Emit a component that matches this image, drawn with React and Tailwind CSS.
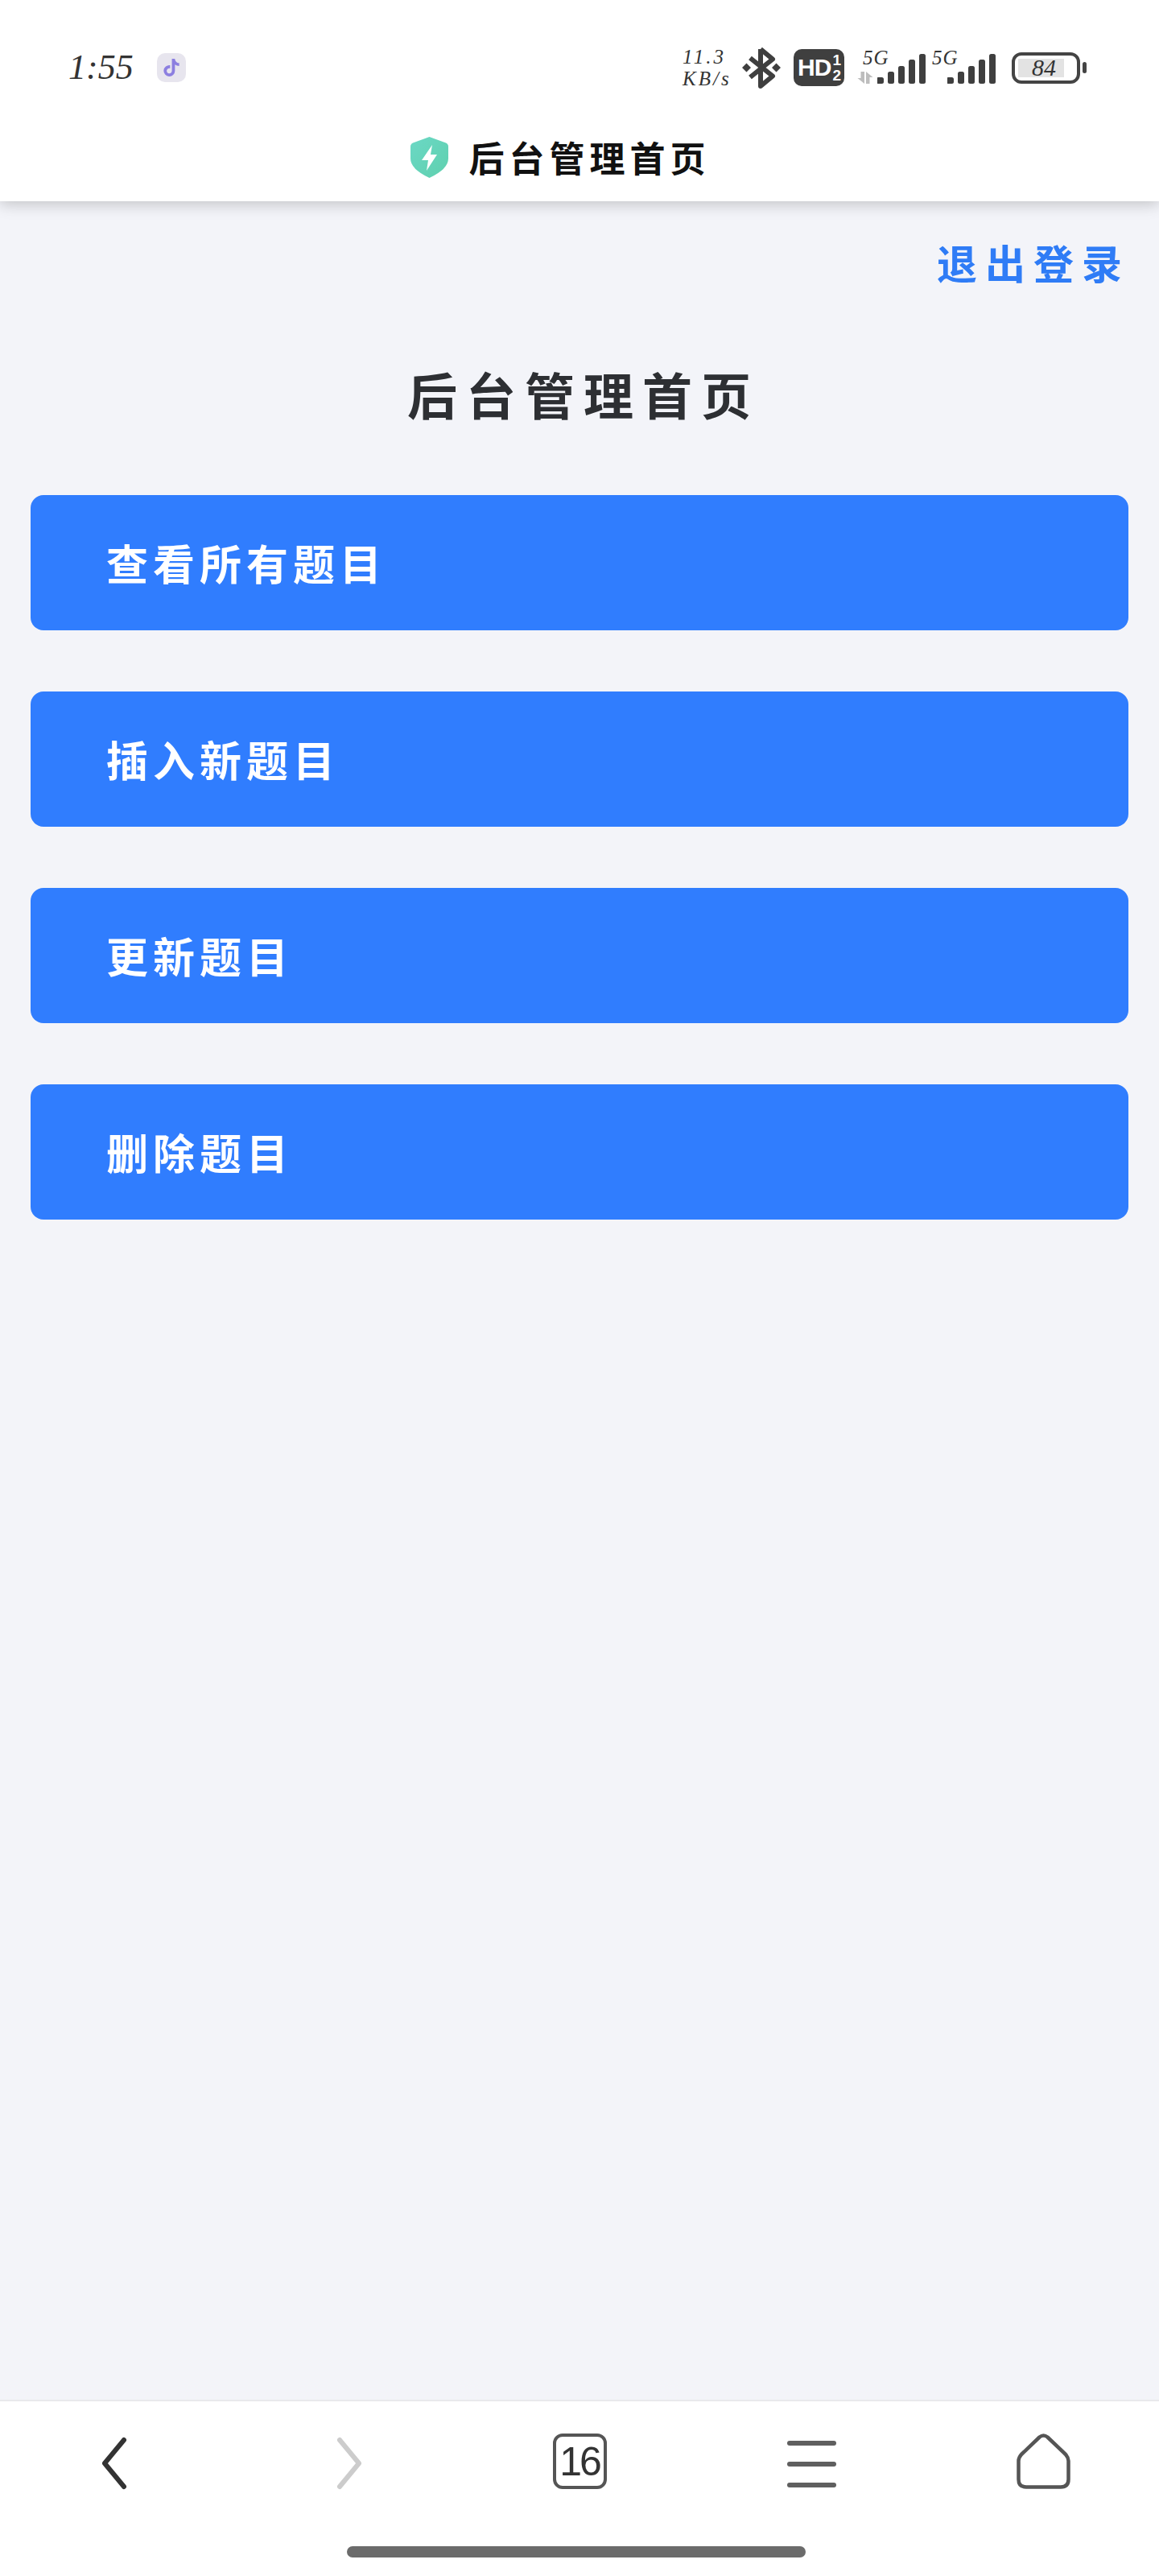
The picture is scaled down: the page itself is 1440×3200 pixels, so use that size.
import React from 'react';
import { FaTiktok } from 'react-icons/fa';

const MENU_ITEMS = ['查看所有题目', '插入新题目', '更新题目', '删除题目'];

const SERIF = "font-['Liberation_Serif',serif] italic";
const CJK = "font-['Noto_Sans_CJK_SC',sans-serif]";

const BAR_TOPS = [29, 22, 15, 7, 0];

const Bars = () => (
    <svg width="60" height="37" viewBox="0 0 60 37" className="shrink-0">
        {BAR_TOPS.map((top, i) => (
            <rect key={i} x={i * 13 - (i === 0 ? 1 : 0)} y={top} width={i === 0 ? 9 : 8} height={37 - top} rx="2.5" fill="#3f3f3f" />
        ))}
    </svg>
);

const Signal = ({ showArrows, width }) => (
    <div className={`relative flex items-end justify-end h-[40px] ${width}`}>
        <span className={`absolute left-0 top-[-6px] text-[25px] leading-[28px] tracking-[1px] text-[#333] ${SERIF} ${showArrows ? 'ml-[7px]' : ''}`}>5G</span>
        {showArrows && (
            <svg width="20" height="15" viewBox="0 0 20 15" className="absolute left-0 bottom-0">
                <path d="M9 0V15L0.5 8H4.5V0zM11 15V0l8.5 7h-4v8z" fill="#bdbdbd" />
            </svg>
        )}
        <Bars />
    </div>
);

const StatusBar = () => (
    <div className="flex items-center h-[138px] pt-[30px] pl-[85px] pr-[90px]">
        <span className={`text-[44px] leading-none text-[#333] ${SERIF}`}>1:55</span>
        <div className="flex items-center justify-center w-[36px] h-[36px] ml-[29px] rounded-[10px] bg-[#e7e5ee]">
            <FaTiktok className="text-[#8c7fe0] w-[20px] h-[22px]" />
        </div>

        <div className="flex items-center ml-auto">
            <div className={`flex flex-col w-[60px] text-[25px] leading-[27px] text-[#333] tracking-[3px] whitespace-nowrap ${SERIF}`}>
                <span>11.3</span>
                <span>KB/s</span>
            </div>

            {/* bluetooth */}
            <svg width="48" height="52" viewBox="0 0 48 52" className="ml-[14px]">
                <path d="M23 3v46l15-12.5L10 14M23 3l15 12.5L10 38" fill="none" stroke="#3f3f3f" strokeWidth="6" strokeLinejoin="round" />
                <path d="M5.5 20.5L11 26l-5.5 5.5L0 26zM42.5 20.5L48 26l-5.5 5.5L37 26z" fill="#3f3f3f" />
            </svg>

            <div className="flex items-center justify-between w-[63px] h-[46px] ml-[16px] pl-[5px] pr-[4px] rounded-[10px] bg-[#3f3f3f] text-white font-['Liberation_Sans',sans-serif] font-bold">
                <span className="text-[30px] leading-none tracking-[-1px]">HD</span>
                <span className="flex flex-col items-center text-[19px] leading-[19px]">
                    <span>1</span>
                    <span>2</span>
                </span>
            </div>

            <div className="ml-[16px]">
                <Signal showArrows width="w-[85px]" />
            </div>
            <div className="ml-[8px]">
                <Signal width="w-[79px]" />
            </div>

            {/* battery */}
            <div className="flex items-center ml-[20px]">
                <div className="w-[85px] h-[39px] p-[4px] rounded-[12px] border-[4px] border-[#444]">
                    <div className={`flex items-center justify-center w-[57px] h-full pl-[7px] bg-[#e3e3e3] text-[30px] leading-none text-[#333] ${SERIF}`}>84</div>
                </div>
                <div className="w-[5px] h-[14px] ml-[3px] rounded-full bg-[#444]" />
            </div>
        </div>
    </div>
);

const PageHeader = () => (
    <header className="relative z-10 h-[250px] bg-white shadow-[0_3px_18px_rgba(0,0,0,0.22)]">
        <StatusBar />
        <div className="flex items-center justify-center h-[112px] pr-[48px] pt-[2px]">
            <svg width="47" height="51" viewBox="0 0 47 51">
                <defs>
                    <linearGradient id="shield" x1="0" y1="0" x2="1" y2="1">
                        <stop offset="0" stopColor="#6bd8c5" />
                        <stop offset="1" stopColor="#5fd0ae" />
                    </linearGradient>
                </defs>
                <path d="M23.5 0L44 7.5Q47 9 47 12V27Q47 40 23.5 51Q0 40 0 27V12Q0 9 3 7.5z" fill="url(#shield)" />
                <path d="M27 10L14 29h8l-2 13 13-20h-8z" fill="#fff" />
            </svg>
            <h2 className={`ml-[26px] text-[44px] leading-none tracking-[6px] font-bold text-[#111] ${CJK}`}>后台管理首页</h2>
        </div>
    </header>
);

const BottomBar = () => (
    <footer className="h-[219px] bg-white border-t-2 border-[#e9e9ec]">
        <div className="grid grid-cols-5 h-[180px] pt-[40px] items-start justify-items-center">
            <svg width="36" height="66" viewBox="0 0 36 66" className="mr-[6px] mt-[4px]">
                <path d="M31 4L7 33l24 29" fill="none" stroke="#333" strokeWidth="6" strokeLinecap="round" strokeLinejoin="round" />
            </svg>
            <svg width="36" height="66" viewBox="0 0 36 66" className="mr-[-6px] mt-[4px]">
                <path d="M5 4l24 29L5 62" fill="none" stroke="#ccc" strokeWidth="6" strokeLinecap="round" strokeLinejoin="round" />
            </svg>
            <div className="flex items-center justify-center w-[67px] h-[69px] rounded-[12px] border-[4px] border-[#555] font-['Liberation_Sans',sans-serif] text-[50px] leading-none tracking-[-3px] text-[#333]">16</div>
            <div className="flex flex-col gap-[20px] w-[61px] pt-[9px]">
                <div className="h-[6px] rounded-full bg-[#5f5f5f]" />
                <div className="h-[6px] rounded-full bg-[#5f5f5f]" />
                <div className="h-[6px] rounded-full bg-[#5f5f5f]" />
            </div>
            <svg width="67" height="69" viewBox="0 0 67 69">
                <path d="M28.5 4.5Q33.5 0.5 38.5 4.5L61 26Q64.5 30 64.5 34V57Q64.5 66.5 55 66.5H12Q2.5 66.5 2.5 57V34Q2.5 30 6 26z" fill="none" stroke="#555" strokeWidth="4.5" strokeLinejoin="round" />
            </svg>
        </div>
        <div className="w-[570px] h-[14px] ml-[431px] rounded-full bg-[#6b6b6b]" />
    </footer>
);

const App = () => {
    return (
        <div className={`flex flex-col h-[3200px] bg-[#f3f4f9] ${CJK}`}>
            <PageHeader />

            <main className="flex-1 px-[38px]">
                <div className="flex justify-end h-[155px] pt-[45px]">
                    <a className="text-[50px] leading-[60px] tracking-[10px] mr-[-2px] font-bold text-[#2f7cf6]">退出登录</a>
                </div>
                <h1 className="h-[210px] pt-[49px] pl-[10px] text-center text-[62px] leading-[70px] tracking-[11px] font-bold text-[#2d2f33]">后台管理首页</h1>
                <div className="flex flex-col gap-[76px]">
                    {MENU_ITEMS.map(item => (
                        <button key={item} className="flex items-center h-[168px] pl-[94px] rounded-[16px] bg-[#307dfe] text-[52px] leading-none tracking-[6px] font-bold text-white">
                            {item}
                        </button>
                    ))}
                </div>
            </main>

            <BottomBar />
        </div>
    );
};

export default App;
